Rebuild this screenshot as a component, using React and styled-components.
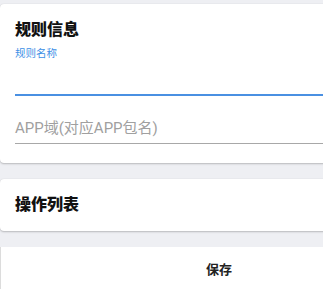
import styled, { createGlobalStyle } from "styled-components";

const Global = createGlobalStyle`
    html, body {
        margin: 0;
        padding: 0;
        background: #eeeff3;
        overflow: hidden;
        font-family: Roboto, "Noto Sans CJK SC", sans-serif;
    }
`

export default function App () {
    return (
        <>
            <Global />
            <Page>
                <Card>
                    <Title>规则信息</Title>
                    <Field active>
                        <FieldLabel>规则名称</FieldLabel>
                        <FieldInput />
                    </Field>
                    <Field>
                        <Placeholder>APP域(对应APP包名)</Placeholder>
                    </Field>
                </Card>
                <Card compact>
                    <Title>操作列表</Title>
                </Card>
                <SaveButton>保存</SaveButton>
            </Page>
        </>
    )
}

const Page = styled.div`
    width: 438px;
    padding-top: 4px;
    display: flex;
    flex-direction: column;
    gap: 16px;
`
const Card = styled.div`
    background: #ffffff;
    border-radius: 4px;
    box-shadow: 0 1px 2px rgba(0, 0, 0, 0.22), 0 0 1px rgba(0, 0, 0, 0.12);
    padding: ${props => props.compact ? "15px 15px 15px" : "15px 15px 19px"};
    display: flex;
    flex-direction: column;
`
const Title = styled.div`
    font-size: 16px;
    line-height: 22px;
    font-weight: 900;
    color: #111;
`
const Field = styled.div`
    display: flex;
    flex-direction: column;
    border-bottom: ${props => props.active ? "2px solid #4a90e2" : "1px solid #a8a8a8"};
    margin-top: ${props => props.active ? "6px" : "22px"};
`
const FieldLabel = styled.div`
    font-size: 10.5px;
    line-height: 14px;
    color: #3d8fe6;
`
const FieldInput = styled.div`
    height: 33px;
`
const Placeholder = styled.div`
    font-size: 15px;
    line-height: 20px;
    color: #a0a0a0;
    padding-bottom: 5px;
`
const SaveButton = styled.div`
    height: 43px;
    background: #ffffff;
    border: 1px solid #dcdcdc;
    border-top: none;
    display: flex;
    align-items: center;
    justify-content: center;
    font-size: 13px;
    font-weight: 700;
    color: #222;
`
